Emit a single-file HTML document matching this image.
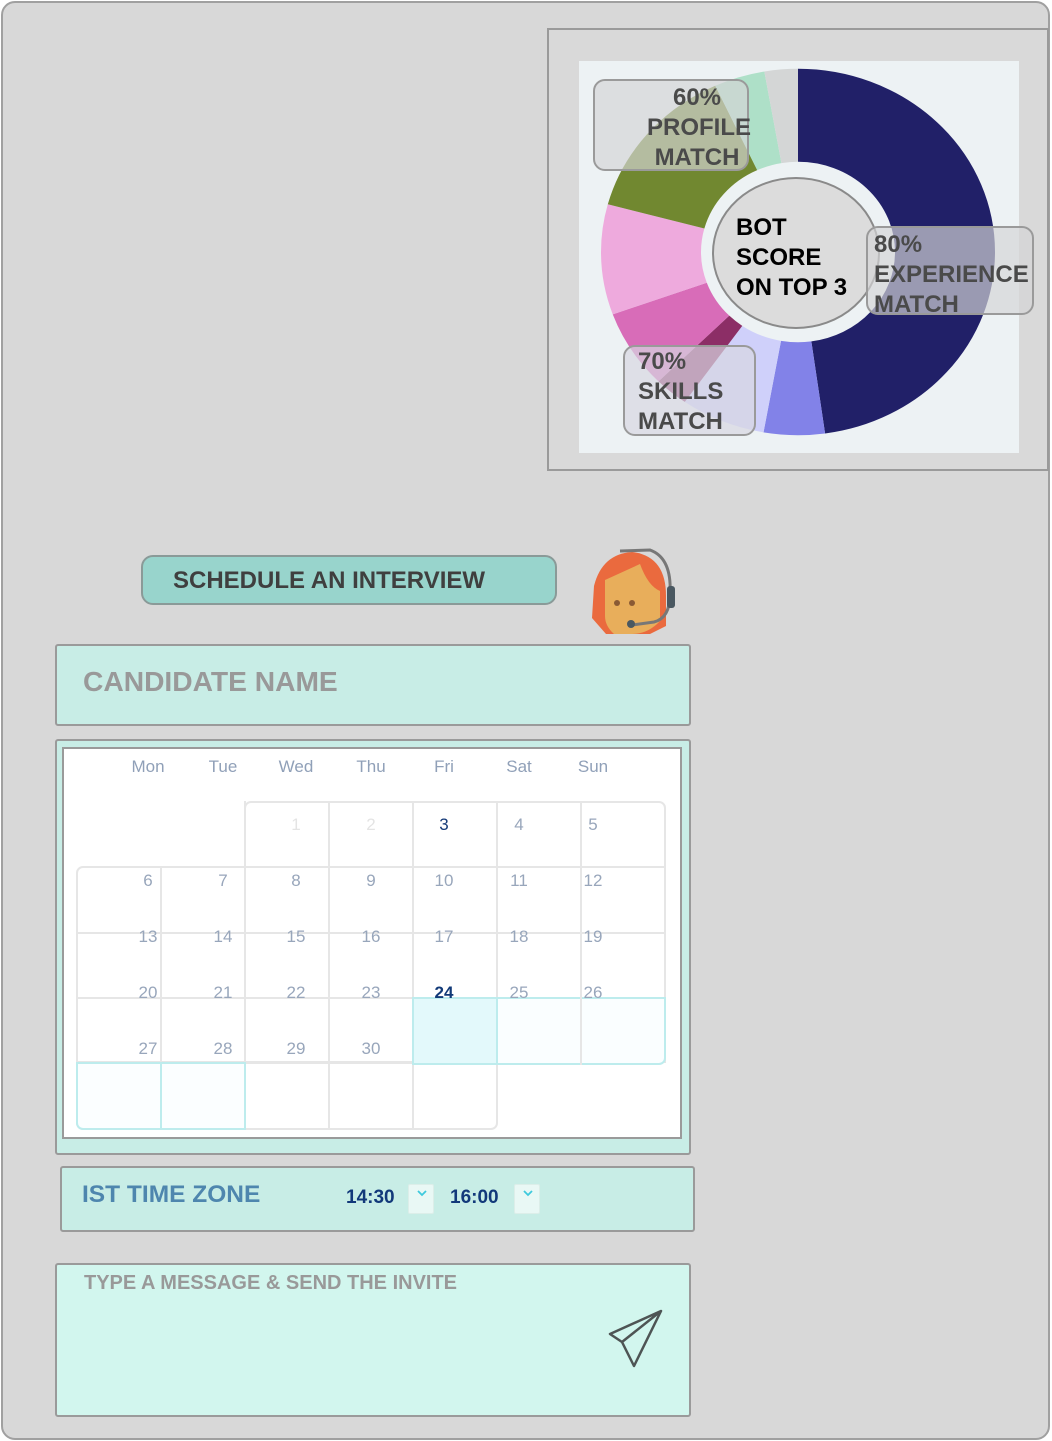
<!DOCTYPE html>
<html><head><meta charset="utf-8"><style>
*{margin:0;padding:0;box-sizing:border-box}
body{width:1052px;height:1441px;background:#fff;font-family:"Liberation Sans",sans-serif;position:relative;overflow:hidden}
.a{position:absolute}
.frame{left:1px;top:1px;width:1049px;height:1439px;background:#d8d8d8;border:2px solid #a0a0a0;border-radius:14px}
.lbl{position:absolute;background:rgba(212,212,214,.68);border:2px solid #9a9a9a;border-radius:12px;font-weight:bold;color:#4a4a4a;font-size:24px;line-height:30px}
.hd{position:absolute;top:757px;font-size:17px;color:#90a0b8;transform:translateX(-50%)}
.n{position:absolute;font-size:17px;color:#98a6bb;transform:translateX(-50%)}
.c{position:absolute;border:2px solid #e6e6e6;background:#fff}
.cy{border-color:#bdeced}
.dd{position:absolute;width:26px;height:30px;background:#e9f8f5;border:1px solid #dceee9;border-radius:2px}
</style></head><body>
<div class="a frame"></div>

<div class="a" style="left:547px;top:28px;width:502px;height:443px;border:2px solid #9a9a9a;background:#d9d9d9"></div>
<div class="a" style="left:579px;top:61px;width:440px;height:392px;background:#edf2f4"></div>
<svg class="a" style="left:0;top:0" width="1052" height="500">
<g transform="translate(798,252) scale(1,0.93) rotate(-90)" fill="none" stroke-width="100">
<circle r="147" stroke="#212068" stroke-dasharray="441.3 923.6" stroke-dashoffset="0"/>
<circle r="147" stroke="#8282e8" stroke-dasharray="46.2 923.6" stroke-dashoffset="-441.3"/>
<circle r="147" stroke="#cfd0fa" stroke-dasharray="64.1 923.6" stroke-dashoffset="-487.5"/>
<circle r="147" stroke="#8c2e66" stroke-dasharray="25.7 923.6" stroke-dashoffset="-551.6"/>
<circle r="147" stroke="#d86cb8" stroke-dasharray="64.1 923.6" stroke-dashoffset="-577.3"/>
<circle r="147" stroke="#eeaadd" stroke-dasharray="89.8 923.6" stroke-dashoffset="-641.4"/>
<circle r="147" stroke="#718830" stroke-dasharray="128.3 923.6" stroke-dashoffset="-731.2"/>
<circle r="147" stroke="#aee0c8" stroke-dasharray="38.5 923.6" stroke-dashoffset="-859.5"/>
<circle r="147" stroke="#d4d6d6" stroke-dasharray="25.7 923.6" stroke-dashoffset="-898"/>
</g>
<ellipse cx="796" cy="253" rx="83" ry="75" fill="#dcdcdc" stroke="#8a8a8a" stroke-width="2"/>
</svg>
<div class="a" style="left:736px;top:213px;font-weight:bold;font-size:24px;line-height:30px;color:#000">BOT<br>SCORE<br>ON TOP 3</div>
<div class="lbl" style="left:593px;top:79px;width:156px;height:92px;text-align:center;padding-left:52px;padding-top:2px;white-space:nowrap">60%<br>PROFILE<br>MATCH</div>
<div class="lbl" style="left:866px;top:226px;width:168px;height:89px;padding-left:6px;padding-top:2px;white-space:nowrap">80%<br>EXPERIENCE<br>MATCH</div>
<div class="lbl" style="left:623px;top:345px;width:133px;height:91px;padding-left:13px;line-height:30px;background:rgba(215,215,225,.7)">70%<br>SKILLS<br>MATCH</div>

<div class="a" style="left:141px;top:555px;width:416px;height:50px;background:#98d4cc;border:2px solid #8a9a98;border-radius:12px;font-weight:bold;font-size:24px;color:#3f3f3f;line-height:48px;padding-left:30px;white-space:nowrap">SCHEDULE AN INTERVIEW</div>
<svg class="a" style="left:588px;top:546px" width="92" height="92" viewBox="0 0 92 92">
<path d="M18 88 L4 72 L6 40 Q14 8 44 6 Q78 10 78 50 L78 80 L62 88 Z" fill="#ea6a3e"/>
<path d="M17 34 L52 18 Q60 40 72 45 L72 75 Q60 88 44 88 L26 88 Q17 80 17 70 Z" fill="#e8ae5b"/>
<circle cx="29" cy="57" r="3" fill="#8a5a34"/><circle cx="44" cy="57" r="3" fill="#8a5a34"/>
<path d="M32 5 L62 4 Q84 12 82 48 Q82 72 66 76 L44 79" fill="none" stroke="#777" stroke-width="3"/>
<rect x="79" y="40" width="8" height="22" rx="3" fill="#4a5861"/>
<circle cx="43" cy="78" r="4" fill="#4a5861"/>
</svg>

<div class="a" style="left:55px;top:644px;width:636px;height:82px;background:#c8ede6;border:2px solid #9a9a9a;border-radius:3px;font-weight:bold;font-size:28.2px;color:#999;padding:19px 0 0 26px;white-space:nowrap">CANDIDATE NAME</div>

<div class="a" style="left:55px;top:739px;width:636px;height:416px;background:#c8ede6;border:2px solid #9a9a9a;border-radius:3px"></div>
<div class="a" style="left:62px;top:747px;width:620px;height:392px;background:#fff;border:2px solid #9a9a9a"></div>
<div class="hd" style="left:148px">Mon</div><div class="hd" style="left:223px">Tue</div><div class="hd" style="left:296px">Wed</div><div class="hd" style="left:371px">Thu</div><div class="hd" style="left:444px">Fri</div><div class="hd" style="left:519px">Sat</div><div class="hd" style="left:593px">Sun</div>

<div class="c" style="left:244px;top:801px;width:422px;height:68px;border-radius:7px 7px 0 0"></div>
<div class="c" style="left:76px;top:866px;width:590px;height:197px;border-radius:7px 0 0 0"></div>
<div class="c" style="left:76px;top:1062px;width:422px;height:68px;border-radius:0 0 7px 7px"></div>
<div class="a" style="left:76px;top:932px;width:590px;height:2px;background:#e6e6e6"></div>
<div class="a" style="left:76px;top:997px;width:590px;height:2px;background:#e6e6e6"></div>
<div class="a" style="left:160px;top:866px;width:2px;height:264px;background:#e6e6e6"></div>
<div class="a" style="left:244px;top:801px;width:2px;height:329px;background:#e6e6e6"></div>
<div class="a" style="left:328px;top:801px;width:2px;height:329px;background:#e6e6e6"></div>
<div class="a" style="left:412px;top:801px;width:2px;height:329px;background:#e6e6e6"></div>
<div class="a" style="left:496px;top:801px;width:2px;height:264px;background:#e6e6e6"></div>
<div class="a" style="left:580px;top:801px;width:2px;height:264px;background:#e6e6e6"></div>
<div class="c cy" style="left:412px;top:997px;width:254px;height:68px;border-radius:0 0 7px 0;background:#fafeff"></div>
<div class="a" style="left:414px;top:999px;width:82px;height:64px;background:#e3f9fb"></div>
<div class="a" style="left:496px;top:997px;width:2px;height:68px;background:#bdeced"></div>
<div class="a" style="left:580px;top:997px;width:2px;height:68px;background:#e6e6e6"></div>
<div class="c cy" style="left:76px;top:1062px;width:170px;height:68px;border-radius:0 0 0 7px;background:#fbfeff"></div>
<div class="a" style="left:160px;top:1062px;width:2px;height:68px;background:#bdeced"></div>

<div class="n" style="left:296px;top:815px;color:#e4e4e4">1</div>
<div class="n" style="left:371px;top:815px;color:#e4e4e4">2</div>
<div class="n" style="left:444px;top:815px;color:#153a78">3</div>
<div class="n" style="left:519px;top:815px">4</div>
<div class="n" style="left:593px;top:815px">5</div>
<div class="n" style="left:148px;top:871px">6</div><div class="n" style="left:223px;top:871px">7</div><div class="n" style="left:296px;top:871px">8</div><div class="n" style="left:371px;top:871px">9</div><div class="n" style="left:444px;top:871px">10</div><div class="n" style="left:519px;top:871px">11</div><div class="n" style="left:593px;top:871px">12</div>
<div class="n" style="left:148px;top:927px">13</div><div class="n" style="left:223px;top:927px">14</div><div class="n" style="left:296px;top:927px">15</div><div class="n" style="left:371px;top:927px">16</div><div class="n" style="left:444px;top:927px">17</div><div class="n" style="left:519px;top:927px">18</div><div class="n" style="left:593px;top:927px">19</div>
<div class="n" style="left:148px;top:983px">20</div><div class="n" style="left:223px;top:983px">21</div><div class="n" style="left:296px;top:983px">22</div><div class="n" style="left:371px;top:983px">23</div><div class="n" style="left:444px;top:983px;color:#123a78;font-weight:bold">24</div><div class="n" style="left:519px;top:983px">25</div><div class="n" style="left:593px;top:983px">26</div>
<div class="n" style="left:148px;top:1039px">27</div><div class="n" style="left:223px;top:1039px">28</div><div class="n" style="left:296px;top:1039px">29</div><div class="n" style="left:371px;top:1039px">30</div>

<div class="a" style="left:60px;top:1166px;width:635px;height:66px;background:#c8ede6;border:2px solid #9a9a9a;border-radius:3px"></div>
<div class="a" style="left:82px;top:1181px;font-weight:bold;font-size:24.5px;color:#4e86ae;white-space:nowrap">IST TIME ZONE</div>
<div class="a" style="left:346px;top:1187px;font-weight:bold;font-size:19px;color:#12397a">14:30</div>
<div class="dd" style="left:408px;top:1184px"><svg width="26" height="30" viewBox="0 0 26 30"><path d="M9 6 L13 10 L17 6" fill="none" stroke="#3ec9dd" stroke-width="1.8"/></svg></div>
<div class="a" style="left:450px;top:1187px;font-weight:bold;font-size:19px;color:#12397a">16:00</div>
<div class="dd" style="left:514px;top:1184px"><svg width="26" height="30" viewBox="0 0 26 30"><path d="M9 6 L13 10 L17 6" fill="none" stroke="#3ec9dd" stroke-width="1.8"/></svg></div>

<div class="a" style="left:55px;top:1263px;width:636px;height:154px;background:#d2f6ee;border:2px solid #9a9a9a;border-radius:3px"></div>
<div class="a" style="left:84px;top:1272px;font-weight:bold;font-size:20px;color:#999;white-space:nowrap">TYPE A MESSAGE &amp; SEND THE INVITE</div>
<svg class="a" style="left:600px;top:1305px" width="70" height="70" viewBox="0 0 70 70">
<path d="M61 6 L10 29 L22 37 L34 61 Z M61 6 L22 37" fill="none" stroke="#4e5454" stroke-width="2.5" stroke-linejoin="round"/>
</svg>
</body></html>
